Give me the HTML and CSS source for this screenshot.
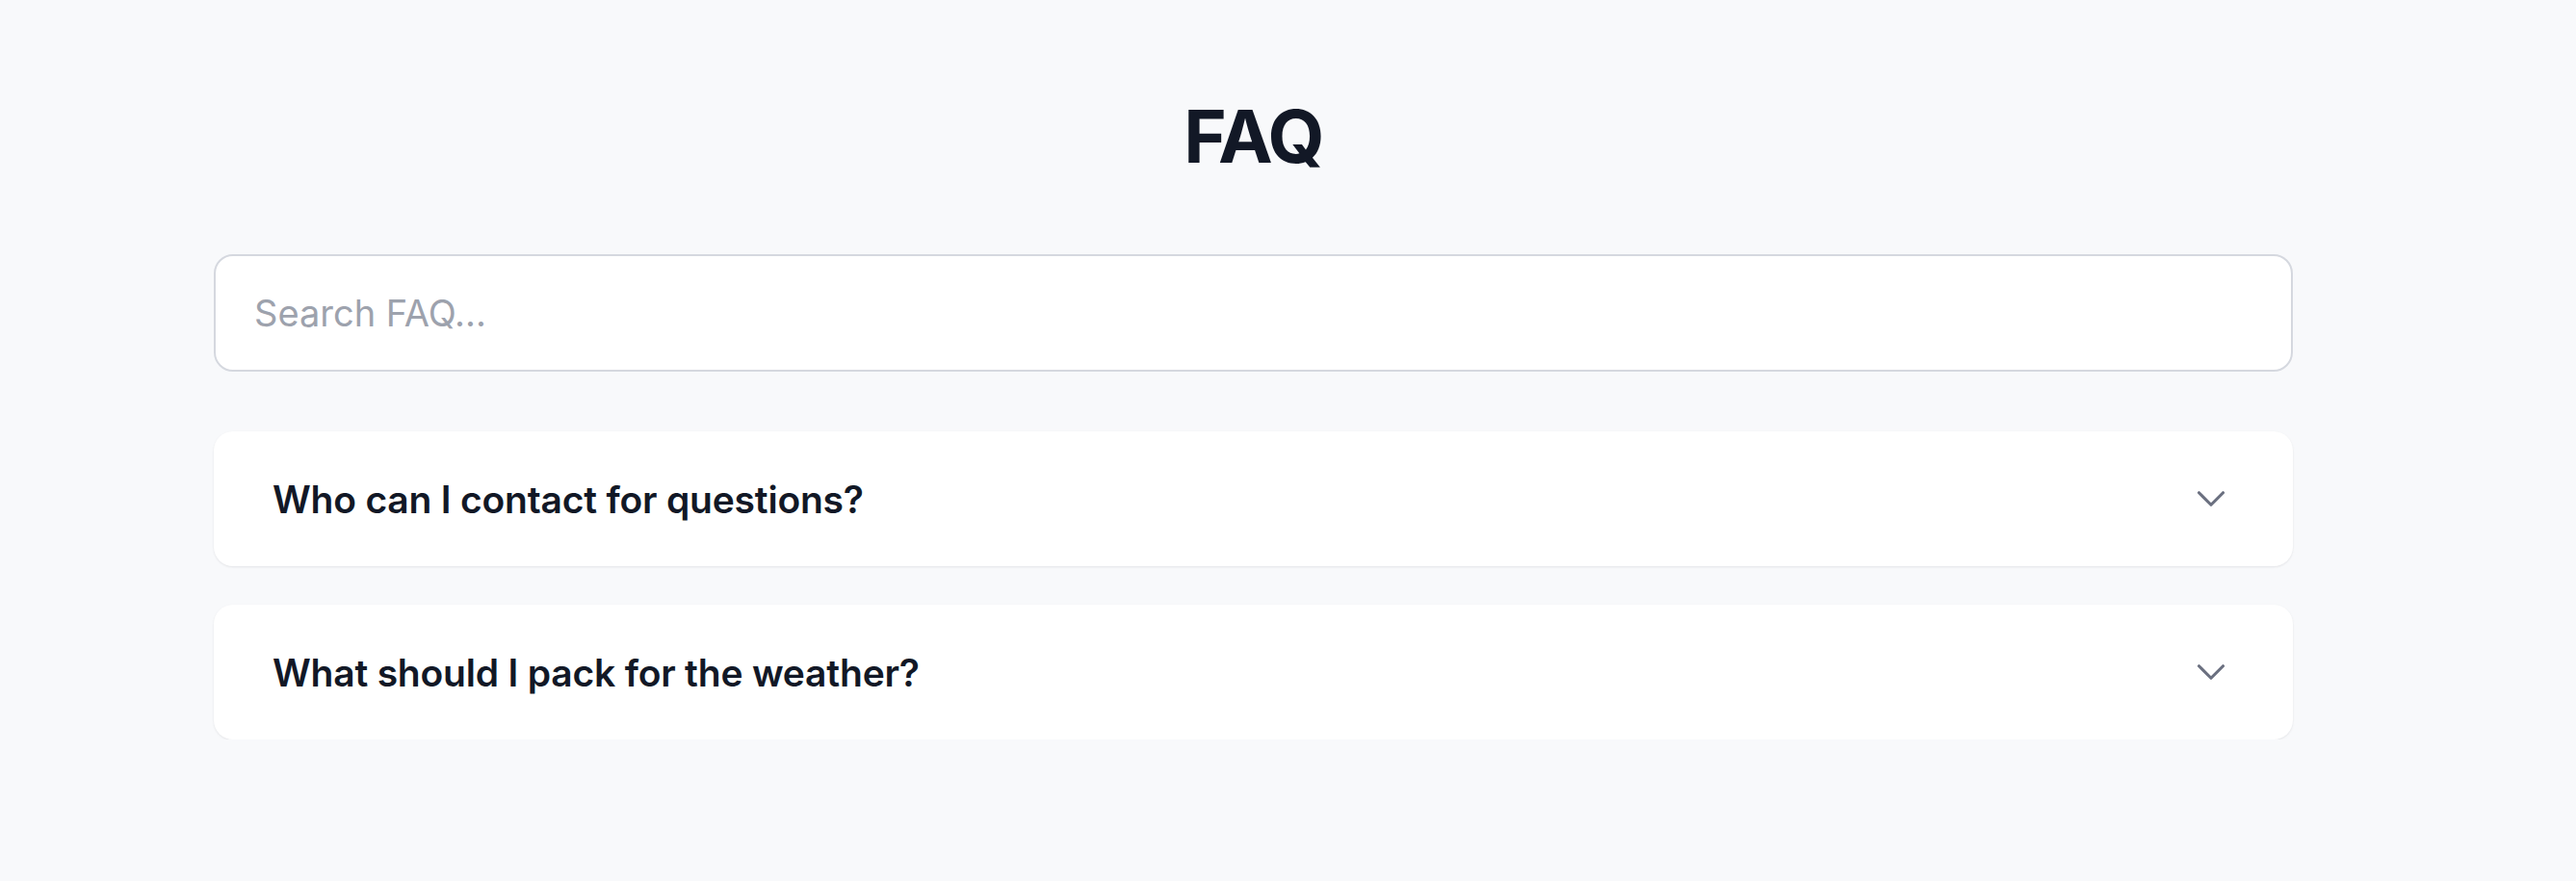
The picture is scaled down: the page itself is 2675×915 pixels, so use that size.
FILE: index.html
```html
<!DOCTYPE html>
<html lang="en">
<head>
<meta charset="utf-8">
<title>FAQ</title>
<link rel="stylesheet" href="styles.css">
</head>
<body>
<div class="page">
  <main class="faq">
    <h1 class="faq-title">FAQ</h1>
    <input class="faq-search" type="text" placeholder="Search FAQ...">
    <div class="faq-list">
      <div class="faq-item">
        <span class="faq-question">Who can I contact for questions?</span>
        <svg class="faq-chevron" viewBox="0 0 24 24" fill="none" stroke="currentColor" stroke-width="1.5" stroke-linecap="round" stroke-linejoin="round"><path d="m6 9 6 6 6-6"/></svg>
      </div>
      <div class="faq-item">
        <span class="faq-question">What should I pack for the weather?</span>
        <svg class="faq-chevron" viewBox="0 0 24 24" fill="none" stroke="currentColor" stroke-width="1.5" stroke-linecap="round" stroke-linejoin="round"><path d="m6 9 6 6 6-6"/></svg>
      </div>
    </div>
  </main>
</div>
</body>
</html>
```

FILE: styles.css
```css
html, body {
  margin: 0;
  padding: 0;
}
body {
  background: #f8f9fb;
  font-family: Inter, "Liberation Sans", sans-serif;
  color: #121826;
}
.page {
  width: 2603px;
}
.faq {
  width: 2159px;
  margin: 0 auto;
  padding-top: 95px;
}
.faq-title {
  margin: 0;
  text-align: center;
  font-size: 76px;
  line-height: 92px;
  font-weight: 700;
  letter-spacing: -2px;
  color: #121826;
}
.faq-search {
  display: block;
  box-sizing: border-box;
  width: 100%;
  height: 122px;
  margin-top: 77px;
  padding: 0 40px;
  border: 2px solid #d5d8df;
  border-radius: 20px;
  background: #ffffff;
  font-family: Inter, "Liberation Sans", sans-serif;
  font-size: 38px;
  color: #121826;
  outline: none;
}
.faq-search::placeholder {
  color: #9da2ad;
  font-weight: 400;
}
.faq-list {
  display: flex;
  flex-direction: column;
  gap: 40px;
  margin-top: 62px;
}
.faq-item {
  display: flex;
  align-items: center;
  justify-content: space-between;
  height: 140px;
  padding: 0 60px 0 61px;
  background: #ffffff;
  border-radius: 20px;
  box-shadow: 0 1px 3px rgba(17, 24, 39, 0.06), 0 1px 2px rgba(17, 24, 39, 0.03);
}
.faq-question {
  font-size: 39px;
  font-weight: 600;
  letter-spacing: -0.2px;
  color: #121826;
}
.faq-chevron {
  width: 50px;
  height: 50px;
  color: #6b7080;
  flex: none;
}
```
